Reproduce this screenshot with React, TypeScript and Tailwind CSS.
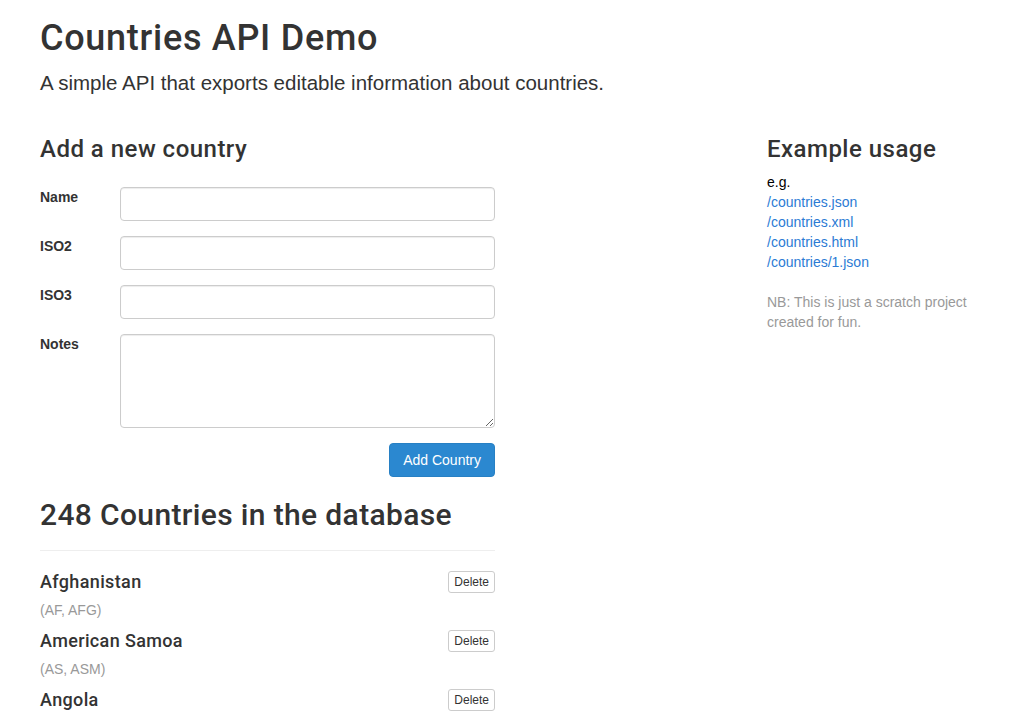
import React from "react";

const countries = [
  { name: "Afghanistan", codes: "(AF, AFG)" },
  { name: "American Samoa", codes: "(AS, ASM)" },
  { name: "Angola", codes: "(AO, AGO)" },
];

const body = { fontFamily: '"Liberation Sans", Arial, sans-serif' };
const head = "font-['Roboto',_'Liberation_Sans',_sans-serif] font-medium text-[#333]";

function Field({ label, textarea }: { label: string; textarea?: boolean }) {
  return (
    <div className="flex mb-[15px]">
      <label className="w-[80px] font-bold text-[14px] leading-[20px] text-[#333]">{label}</label>
      {textarea ? (
        <textarea
          rows={4}
          className="w-[375px] h-[94px] border border-[#ccc] rounded-[4px] shadow-[inset_0_1px_1px_rgba(0,0,0,0.075)] px-[12px] py-[6px] bg-white"
        />
      ) : (
        <input
          type="text"
          className="w-[375px] h-[34px] border border-[#ccc] rounded-[4px] shadow-[inset_0_1px_1px_rgba(0,0,0,0.075)] px-[12px] bg-white"
        />
      )}
    </div>
  );
}

export default function App() {
  return (
    <div className="bg-white min-h-[711px] text-[14px] leading-[20px] text-[#333]" style={body}>
      <div className="w-[940px] mx-auto">
        <h1 className={`${head} tracking-[0.02em] text-[36px] leading-[40px] pt-[18px]`}>Countries API Demo</h1>
        <p className="text-[20.5px] leading-[29px] mt-[10px] text-[#333]">
          A simple API that exports editable information about countries.
        </p>
        <div className="flex">
          <div className="w-[455px]">
            <h3 className={`${head} tracking-[0.02em] text-[24px] leading-[26px] mt-[39px]`}>Add a new country</h3>
            <form className="mt-[25px]" onSubmit={(e) => e.preventDefault()}>
              <Field label="Name" />
              <Field label="ISO2" />
              <Field label="ISO3" />
              <Field label="Notes" textarea />
              <div className="flex justify-end">
                <button
                  type="submit"
                  className="h-[34px] px-[13px] bg-[#2b88d0] border border-[#2780c4] rounded-[4px] text-white text-[14px] leading-[20px]"
                >
                  Add Country
                </button>
              </div>
            </form>
            <h2 className={`${head} tracking-[0.012em] text-[30px] leading-[33px] mt-[21px]`}>248 Countries in the database</h2>
            <hr className="mt-[19px] border-0 border-t border-[#eee]" />
            <div className="mt-[21px]">
              {countries.map((c) => (
                <div key={c.name} className="mb-[11px]">
                  <div className="flex justify-between items-start">
                    <h4 className={`${head} tracking-[0.02em] text-[18px] leading-[20px]`}>{c.name}</h4>
                    <button className="h-[22px] px-[5px] -mt-[1px] bg-white border border-[#ccc] rounded-[3px] text-[12px] leading-[18px] text-[#333]">
                      Delete
                    </button>
                  </div>
                  <div className="mt-[7px] text-[#999]">{c.codes}</div>
                </div>
              ))}
            </div>
          </div>
          <div className="ml-[272px] w-[213px]">
            <h3 className={`${head} tracking-[0.02em] text-[24px] leading-[26px] mt-[39px]`}>Example usage</h3>
            <div className="mt-[10px]">
              <div className="text-black">e.g.</div>
              <a href="#" className="block text-[#2b7bd4]">/countries.json</a>
              <a href="#" className="block text-[#2b7bd4]">/countries.xml</a>
              <a href="#" className="block text-[#2b7bd4]">/countries.html</a>
              <a href="#" className="block text-[#2b7bd4]">/countries/1.json</a>
              <p className="mt-[20px] text-[#999]">NB: This is just a scratch project created for fun.</p>
            </div>
          </div>
        </div>
      </div>
    </div>
  );
}
